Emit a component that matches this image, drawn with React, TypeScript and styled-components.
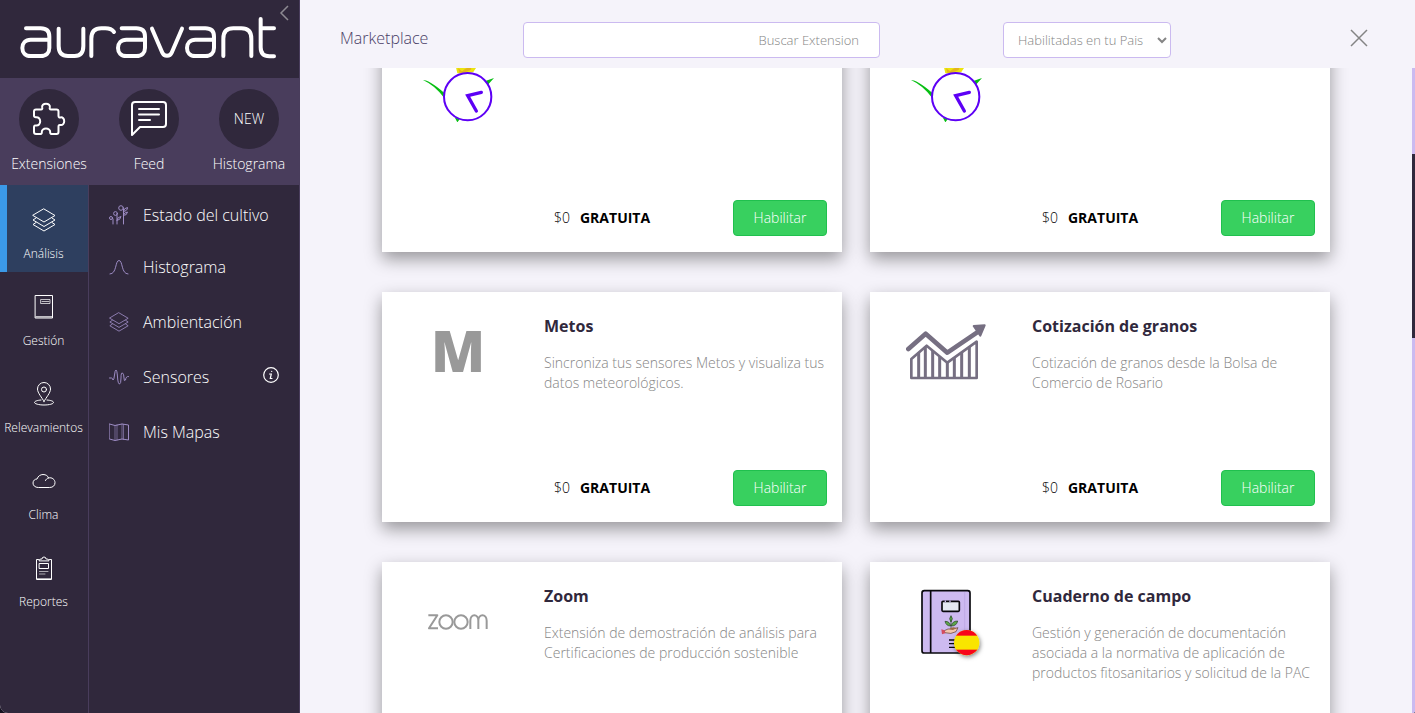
import React, { useLayoutEffect, useRef } from "react";
import styled, { createGlobalStyle } from "styled-components";

const GlobalStyle = createGlobalStyle`
  *, *::before, *::after { box-sizing: border-box; }
  body {
    margin: 0;
    background: #14111f;
    font-family: "Open Sans", "Noto Sans", sans-serif;
    font-weight: 300;
  }
  button, input, select { font: inherit; }
  svg { display: block; }
`;

const Page = styled.div`
  display: flex;
  height: 100vh;
  overflow: hidden;
  border-radius: 0 0 2px 8px;
  background: #f5f3fa;
`;

/* ---------- sidebar ---------- */

const Sidebar = styled.aside`
  display: flex;
  flex-direction: column;
  flex: none;
  width: 300px;
  background: #30283c;
  border-right: 1px solid #493d5c;
  color: #fff;
`;

const Brand = styled.div`
  position: relative;
  height: 78px;
`;

const Collapse = styled.button`
  position: absolute;
  top: 5px;
  right: 7px;
  padding: 0;
  border: 0;
  background: none;
  color: #8d8a92;
`;

const Shortcuts = styled.nav`
  display: grid;
  grid-template-columns: repeat(3, 100px);
  height: 107px;
  padding-top: 11px;
  background: #493d5c;
`;

const Shortcut = styled.a`
  display: flex;
  flex-direction: column;
  align-items: center;
  gap: 5px;
  padding-right: 2px;
  color: #fff;
  font-size: 14px;
  line-height: 20px;
  text-decoration: none;
`;

const Disc = styled.span`
  display: flex;
  align-items: center;
  justify-content: center;
  width: 60px;
  height: 60px;
  border-radius: 50%;
  background: #30283c;
`;

const Menus = styled.div`
  display: flex;
  flex: 1;
`;

const Sections = styled.nav`
  width: 89px;
  border-right: 1px solid #493d5c;
`;

const Section = styled.a<{ $active?: boolean }>`
  display: flex;
  flex-direction: column;
  align-items: center;
  gap: 13px;
  height: 87px;
  padding-top: 23px;
  background: ${(p) => (p.$active ? "#2e3f5f" : "transparent")};
  box-shadow: ${(p) => (p.$active ? "inset 7px 0 0 #3b99e8" : "none")};
  color: #fff;
  font-size: 12px;
  line-height: 18px;
  text-decoration: none;
  padding-right: 1px;
`;

const Tools = styled.nav`
  flex: 1;
  padding-top: 6px;
`;

const Tool = styled.a<{ $first?: boolean }>`
  display: flex;
  align-items: center;
  gap: 14px;
  height: ${(p) => (p.$first ? 48 : 55)}px;
  padding: 0 20px;
  color: #fff;
  font-size: 16px;
  line-height: 22px;
  text-decoration: none;
`;

const ToolIcon = styled.span`
  color: #9d8cc4;
`;

const ToolHint = styled.span`
  margin-left: auto;
  padding-bottom: 4px;
`;

/* ---------- marketplace ---------- */

const Main = styled.main`
  display: flex;
  flex-direction: column;
  flex: 1;
  min-width: 0;
`;

const TopBar = styled.header`
  display: flex;
  align-items: center;
  flex: none;
  height: 68px;
  padding: 12px 46px 0 40px;
`;

const Heading = styled.h1`
  width: 183px;
  margin: 0;
  padding-bottom: 4px;
  color: #493d66;
  font-size: 16px;
  font-weight: 300;
  line-height: 22px;
`;

const Search = styled.input`
  width: 357px;
  height: 36px;
  padding: 0 20px;
  border: 1px solid #cbbaf0;
  border-radius: 4px;
  background: #fff;
  font-size: 13px;
  text-align: right;
  &::placeholder { color: #858585; opacity: 1; }
`;

const Filter = styled.select`
  width: 168px;
  height: 36px;
  margin-left: 123px;
  padding: 0 0 0 10px;
  border: 1px solid #cbbaf0;
  border-radius: 4px;
  background: #fff;
  color: #858585;
  font-size: 13px;
`;

const Close = styled.button`
  margin-left: auto;
  padding: 0 0 4px;
  border: 0;
  background: none;
  color: #848484;
`;

const Body = styled.div`
  display: flex;
  flex: 1;
  min-height: 0;
`;

const Scroller = styled.div`
  flex: 1;
  overflow-y: auto;
  scrollbar-width: none;
`;

const Grid = styled.div`
  display: grid;
  grid-template-columns: repeat(2, 460px);
  justify-content: center;
  gap: 40px 28px;
  padding: 40px 0;
`;

const Track = styled.div`
  width: 3px;
  padding-top: 86px;
  background: #cbbaf0;
`;

const Thumb = styled.div`
  height: 184px;
  background: #30283c;
`;

const Card = styled.article`
  display: grid;
  grid-template-columns: 162px 1fr;
  grid-template-rows: 1fr auto;
  min-height: 230px;
  background: #fff;
  box-shadow: 0 7px 16px rgba(0, 0, 0, 0.38);
`;

const Logo = styled.div`
  width: 80px;
  height: 80px;
  margin: 20px 0 0 36px;
`;

const Summary = styled.div`
  padding: 23px 16px 0 0;
`;

const Title = styled.h2`
  margin: 0 0 16px;
  color: #30283c;
  font-size: 16px;
  font-weight: 700;
  line-height: 22px;
`;

const Description = styled.p`
  margin: 0;
  color: #858585;
  font-size: 14px;
  line-height: 20px;
`;

const Offer = styled.footer`
  grid-column: 2;
  display: flex;
  align-items: center;
  gap: 10px;
  padding: 0 15px 16px 10px;
  color: #000;
  font-size: 14px;
  line-height: 20px;
`;

const Free = styled.strong`
  font-weight: 700;
`;

const Enable = styled.button`
  width: 94px;
  height: 36px;
  margin-left: auto;
  border: 1px solid #20c04e;
  border-radius: 4px;
  background: #38d05f;
  color: #fff;
  font-size: 14px;
`;

/* ---------- drawings ---------- */

const BrandLogo = () => (
  <svg role="img" aria-label="auravant" width="300" height="78" viewBox="0 0 900 234" fill="none" stroke="#fff" strokeWidth="12" strokeLinecap="round" strokeLinejoin="round">
    {[0, 287, 494].map((x) => (
      <path key={x} transform={`translate(${x} 0)`} d="M148 119H92C76 119 67 130 67 144S76 168 92 168H122C139 168 148 158 148 144V110C148 94 139 85 122 85H78" />
    ))}
    <path d="M176 86V138C176 158 186 168 204 168H224C242 168 250 158 250 138V86" />
    <path d="M274 168V116C274 95 284 85 304 85H316C328 85 336 88 342 96" />
    <path d="M456 86L487 158C492 170 510 170 515 158L546 86" />
    <path d="M670 168V116C670 95 680 85 700 85H724C744 85 754 95 754 116V168" />
    <path d="M782 57V142C782 160 790 169 808 169H822M782 85H822" />
  </svg>
);

const Puzzle = () => (
  <svg width="34" height="34" viewBox="-1 -1 34 34" fill="none" stroke="#fff" strokeWidth="2" strokeLinejoin="round">
    <path d="M3 6.500H8C9.300 6.500 9.500 5.500 9.200 4.500C8.600 2.300 10.500 .8 13 .8S17.400 2.300 16.800 4.500C16.500 5.500 16.700 6.500 18 6.500H23.500Q25.500 6.500 25.500 8.500V13C25.500 14.400 26.500 14.600 27.500 14.400C29.700 14 31.200 15.700 31.200 18.200S29.700 22.400 27.500 22C26.500 21.800 25.500 22 25.500 23.400V29Q25.500 31 23.500 31H18.500C17.300 31 17.100 30 17.200 29C17.300 26.800 15.300 25.500 13 25.500S8.700 26.800 8.800 29C8.900 30 8.700 31 7.500 31H3Q1 31 1 29V24C1 22.600 2 22.300 3 22.400C5.600 22.600 7.200 21 7.200 18.300S5.600 14 3 14.200C2 14.300 1 14 1 12.700V8.500Q1 6.500 3 6.500Z" />
  </svg>
);

const Chat = () => (
  <svg width="38" height="38" viewBox="0 0 38 38" fill="none" stroke="#fff" strokeWidth="2" strokeLinejoin="round" strokeLinecap="round">
    <path d="M5 2H33Q36 2 36 5V24Q36 27 33 27H10L2 35V5Q2 2 5 2Z" />
    <path d="M9 9H29M9 14.500H29M9 20H20" />
  </svg>
);

const line = { fill: "none", stroke: "currentColor", strokeWidth: 1, strokeLinejoin: "round" as const, strokeLinecap: "round" as const };

const Layers = ({ size }: { size: number }) => (
  <svg width={size} height={size} viewBox="0 0 24 24" {...line}>
    <path d="M12 1L23 7.500L12 14L1 7.500ZM4 10L1 12L12 18.500L23 12L20 10M4 14.500L1 16.500L12 23L23 16.500L20 14.500" />
  </svg>
);

const Notebook = () => (
  <svg width="24" height="24" viewBox="0 0 24 24" {...line}>
    <path d="M3.500 .5H20.500V23H3.500ZM4 21.800H20" />
    <path d="M9 4.500H18V8.500H9ZM10 6.500H17" opacity="0.7" />
  </svg>
);

const Pin = () => (
  <svg width="24" height="24" viewBox="0 0 24 24" {...line}>
    <path d="M12 19.500C10 15.500 5.500 11 5.500 7A6.500 6.500 0 0 1 18.500 7C18.500 11 14 15.500 12 19.500ZM9 18C5 18.300 2.500 19.300 2.500 20.500S6.500 23 12 23S21.500 21.800 21.500 20.500S19 18.300 15 18" />
    <circle cx="12" cy="7.500" r="2.500" />
  </svg>
);

const Cloud = () => (
  <svg width="24" height="24" viewBox="0 0 24 24" {...line}>
    <path d="M6 18.500C3 18.500 1 16.500 1 14C1 11.500 3 10 5 10C6 7 8.500 5.500 11 5.500C14 5.500 16 7 16.500 9C20 8 23 10.500 23 13.700C23 16.500 21 18.500 18 18.500ZM16.500 9C15 9.300 14 10.300 13.500 11.500" />
  </svg>
);

const Clipboard = () => (
  <svg width="24" height="24" viewBox="0 0 24 24" {...line}>
    <path d="M6.500 3.500H4.500V23.500H19.500V3.500H17.500M7 4.500Q7 3 9 3H10Q10 1 12 1T14 3H15Q17 3 17 4.500ZM7.500 7.500H16.500V12.500H7.500Z" />
    <path d="M4.500 22.500H19.500M7.500 15.500H16M7.500 18H13" opacity="0.600" />
  </svg>
);

const Crop = () => (
  <svg width="20" height="20" viewBox="0 0 20 20" {...line}>
    <path d="M14.500 19V4M8 19V9M4 19V14" />
    <circle cx="12" cy="3" r="2.300" />
    <circle cx="6.500" cy="8.500" r="1.900" />
    <circle cx="2" cy="13" r="1.500" />
    <path d="M14.500 6Q15 3 18.500 2.500Q18.500 6 14.500 6.500ZM14.500 10Q15 7.500 18.500 7Q18 10.500 14.500 10.500ZM8 15Q8.500 12 12 11.500Q11.500 15 8 15.500" />
  </svg>
);

const Bell = () => (
  <svg width="20" height="20" viewBox="0 0 20 20" {...line}>
    <path d="M1 17C8 17 6 3.500 10 3.500S12 17 19 17" />
  </svg>
);

const Pulse = () => (
  <svg width="20" height="20" viewBox="0 0 20 20" {...line}>
    <path d="M.5 11H2.500Q3.500 11 4 13Q5 13 5.500 8Q6 3 7 3T8.500 10T10.500 17T12 11T13.500 6T15 11T16.500 13Q17 9 19.500 9.500" />
  </svg>
);

const MapIcon = () => (
  <svg width="20" height="20" viewBox="0 0 20 20" {...line}>
    <path d="M.5 2L6 3.500L13 2L19.500 3V18L13 17L6 18.500L.5 17Z" />
    <path d="M6 3.500V18.500M8 3V18M13 2V17M14.500 2.500V17.500" opacity="0.600" />
  </svg>
);

const InfoIcon = () => (
  <svg width="16" height="16" viewBox="0 0 16 16" fill="none" stroke="#fff" strokeWidth="1.200" strokeLinecap="round">
    <circle cx="8" cy="8" r="7.300" />
    <path d="M6.500 7H8.300L7.300 11.500H9M8.700 4.300V4.500" />
  </svg>
);

const ClockFlower = () => (
  <svg width="80" height="80" viewBox="114 -54 240 240">
    <path d="M222 -10L244 -22L262 -38L282 -18L296 -4L288 24L280 36L262 40L232 40L228 22Z" fill="#ece50d" />
    <path d="M234 24L246 34L256 26L276 18L272 30L252 38L238 38Z" fill="#e5b51b" />
    <path d="M129 60Q148 60 192 98L191 112Q164 76 129 60ZM316 63L342 54L323 75ZM224 172L232 187L239 178Z" fill="#07bf13" />
    <circle cx="263" cy="110" r="71" fill="#fff" stroke="#5d00f5" strokeWidth="6" />
    <path d="M304 97L263 107L289 153" fill="none" stroke="#5d00f5" strokeWidth="10" strokeLinecap="round" />
  </svg>
);

const MetosMark = () => (
  <svg width="80" height="80" viewBox="0 0 80 80">
    <text x="40" y="60" textAnchor="middle" fontFamily="Open Sans" fontWeight="800" fontSize="56" fill="#999">M</text>
  </svg>
);

const GrainChart = () => (
  <svg width="80" height="80" viewBox="48 6 240 240" fill="none" stroke="#766f82" strokeLinejoin="round" strokeLinecap="round">
    <path d="M55 117L107 71L172 128L266 64" strokeWidth="14" />
    <path d="M251 48L284 46L271 77Z" fill="#766f82" strokeWidth="6" />
    <path d="M64 204V147L110 107L172 158L260 95V204Z" strokeWidth="8" />
    <path d="M86 128V202M106 110V202M128 122V202M149 140V202M172 158V202M193 143V202M215 127V202M238 111V202" strokeWidth="9" strokeLinecap="butt" />
  </svg>
);

const ZoomMark = () => (
  <svg role="img" aria-label="zoom" width="80" height="80" viewBox="54 -24 240 240" fill="none" stroke="#999" strokeWidth="6" strokeLinejoin="round">
    <path d="M85 76H112L87 115H114M211 117V92C211 70 235 70 235 92V117M235 92C235 70 260 70 260 92V117" />
    <circle cx="138" cy="96" r="20" />
    <circle cx="183" cy="96" r="20" />
  </svg>
);

const FieldBook = () => (
  <svg width="80" height="80" viewBox="18 6 240 240" overflow="visible">
    <defs>
      <clipPath id="flag"><circle cx="200" cy="188" r="38" /></clipPath>
      <filter id="flagShadow" x="-50%" y="-50%" width="200%" height="200%">
        <feDropShadow dx="3" dy="5" stdDeviation="6" floodOpacity="0.5" />
      </filter>
    </defs>
    <rect x="66" y="32" width="144" height="187" rx="7" fill="#cdbaf0" stroke="#08080c" strokeWidth="5" />
    <path d="M92 32V219" stroke="#08080c" strokeWidth="5" />
    <path d="M194 36V216" stroke="#b9a4e2" strokeWidth="2" />
    <rect x="126" y="64" width="52" height="30" rx="3" fill="#e4e8f2" stroke="#08080c" strokeWidth="5" />
    <path d="M134 64H138M148 64H152" stroke="#cdbaf0" strokeWidth="5" />
    <g stroke="#223c22" strokeWidth="2" fill="#5da64a">
      <path d="M153 146V112" />
      <path d="M153 126Q145 116 153 107Q161 116 153 126ZM152 138Q138 138 135 124Q150 124 152 138ZM154 138Q156 123 173 123Q170 138 154 138Z" />
    </g>
    <path d="M133 152L144 147L158 147L174 143L168 155Q154 164 134 158Z" fill="#f5c5ad" stroke="#51342e" strokeWidth="2" />
    <path d="M148 147Q158 138 170 145L158 150Z" fill="#a06a45" />
    <path d="M124 148L134 151L136 160L126 163Z" fill="#d44c60" />
    <path d="M147 180H165M147 191H165M147 202H165" stroke="#08080c" strokeWidth="4" />
    <circle cx="200" cy="188" r="38" fill="#f9e500" filter="url(#flagShadow)" />
    <g clipPath="url(#flag)" fill="#f8051b">
      <rect x="160" y="148" width="80" height="19" />
      <rect x="160" y="209" width="80" height="20" />
    </g>
  </svg>
);

/* ---------- data ---------- */

const sections = [
  { label: "Análisis", icon: <Layers size={24} />, active: true },
  { label: "Gestión", icon: <Notebook /> },
  { label: "Relevamientos", icon: <Pin /> },
  { label: "Clima", icon: <Cloud /> },
  { label: "Reportes", icon: <Clipboard /> },
];

const tools = [
  { label: "Estado del cultivo", icon: <Crop /> },
  { label: "Histograma", icon: <Bell /> },
  { label: "Ambientación", icon: <Layers size={20} /> },
  { label: "Sensores", icon: <Pulse />, info: true },
  { label: "Mis Mapas", icon: <MapIcon /> },
];

interface Extension {
  id: string;
  logo: React.ReactNode;
  title?: string;
  text?: string;
  free?: boolean;
}

const extensions: Extension[] = [
  { id: "clock-a", logo: <ClockFlower />, free: true },
  { id: "clock-b", logo: <ClockFlower />, free: true },
  { id: "metos", logo: <MetosMark />, free: true, title: "Metos", text: "Sincroniza tus sensores Metos y visualiza tus datos meteorológicos." },
  { id: "granos", logo: <GrainChart />, free: true, title: "Cotización de granos", text: "Cotización de granos desde la Bolsa de Comercio de Rosario" },
  { id: "zoom", logo: <ZoomMark />, title: "Zoom", text: "Extensión de demostración de análisis para Certificaciones de producción sostenible" },
  { id: "cuaderno", logo: <FieldBook />, title: "Cuaderno de campo", text: "Gestión y generación de documentación asociada a la normativa de aplicación de productos fitosanitarios y solicitud de la PAC" },
];

const ExtensionCard = ({ logo, title, text, free }: Extension) => (
  <Card>
    <Logo>{logo}</Logo>
    <Summary>
      {title && <Title>{title}</Title>}
      {text && <Description>{text}</Description>}
    </Summary>
    {free && (
      <Offer>
        <span>$0</span>
        <Free>GRATUITA</Free>
        <Enable type="button">Habilitar</Enable>
      </Offer>
    )}
  </Card>
);

export default function App() {
  const scroller = useRef<HTMLDivElement>(null);

  useLayoutEffect(() => {
    if (scroller.current) scroller.current.scrollTop = 86;
  }, []);

  return (
    <>
      <GlobalStyle />
      <Page>
        <Sidebar>
          <Brand>
            <BrandLogo />
            <Collapse type="button" aria-label="Contraer">
              <svg width="16" height="16" viewBox="0 0 16 16" fill="none" stroke="currentColor" strokeWidth="1.500">
                <path d="M12 1L5 8L12 15" />
              </svg>
            </Collapse>
          </Brand>
          <Shortcuts>
            <Shortcut href="#extensiones"><Disc><Puzzle /></Disc>Extensiones</Shortcut>
            <Shortcut href="#feed"><Disc><Chat /></Disc>Feed</Shortcut>
            <Shortcut href="#new"><Disc>NEW</Disc>Histograma</Shortcut>
          </Shortcuts>
          <Menus>
            <Sections>
              {sections.map((s) => (
                <Section key={s.label} href="#seccion" $active={s.active}>
                  {s.icon}
                  {s.label}
                </Section>
              ))}
            </Sections>
            <Tools>
              {tools.map((t, i) => (
                <Tool key={t.label} href="#herramienta" $first={i === 0}>
                  <ToolIcon>{t.icon}</ToolIcon>
                  {t.label}
                  {t.info && <ToolHint><InfoIcon /></ToolHint>}
                </Tool>
              ))}
            </Tools>
          </Menus>
        </Sidebar>
        <Main>
          <TopBar>
            <Heading>Marketplace</Heading>
            <Search type="text" aria-label="Buscar Extension" placeholder="Buscar Extension" />
            <Filter aria-label="Filtro" defaultValue="pais">
              <option value="pais">Habilitadas en tu Pais</option>
            </Filter>
            <Close type="button" aria-label="Cerrar">
              <svg width="20" height="20" viewBox="0 0 20 20" fill="none" stroke="currentColor" strokeWidth="1.500">
                <path d="M2 2L18 18M18 2L2 18" />
              </svg>
            </Close>
          </TopBar>
          <Body>
            <Scroller ref={scroller}>
              <Grid>
                {extensions.map((e) => (
                  <ExtensionCard key={e.id} {...e} />
                ))}
              </Grid>
            </Scroller>
            <Track><Thumb /></Track>
          </Body>
        </Main>
      </Page>
    </>
  );
}
